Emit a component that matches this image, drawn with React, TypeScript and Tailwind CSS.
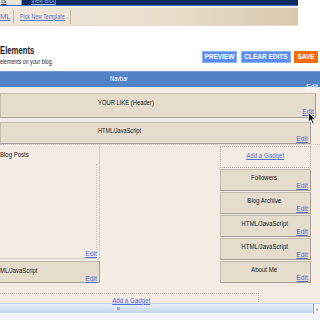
import React from "react";

const Edit = ({ className = "" }: { className?: string }) => (
  <span className={"text-[7.5px] leading-none text-[#4f6fd8] " + className}>
    <span className="inline-block origin-right scale-x-[0.9] underline">Edit</span>
  </span>
);

const Gadget = ({ title }: { title: string }) => (
  <div className="h-[22px] bg-[#e6dccb] border border-[#c3bbae] border-b-[#a9a197] border-r-[#a9a197] flex flex-col pr-[2px]">
    <div className="text-center text-[8px] leading-none text-[#1a1a1a] mt-[4px] whitespace-nowrap">
      <span className="inline-block scale-x-[0.76]">{title}</span>
    </div>
    <div className="flex justify-end mt-auto mb-[1px]">
      <Edit />
    </div>
  </div>
);

export default function App() {
  return (
    <div className="w-[320px] h-[320px] overflow-hidden bg-white flex flex-col font-['Liberation_Sans',Arial,sans-serif] relative">
      {/* top nav */}
      <div className="h-[8px] flex shrink-0">
        <div className="w-[298px] flex flex-col">
          <div className="h-[5px] flex">
            <div className="w-[22px] bg-[#ece4d6] border-r border-[#9a9080] overflow-hidden">
              <div className="text-[7px] leading-none text-[#333] underline -mt-[3px] pl-[1px]">ts</div>
            </div>
            <div className="flex-1 bg-[#0c2c62] overflow-hidden">
              <div className="text-[7px] leading-none text-[#9fbdf0] -mt-[3px] pl-[9px]">
                <span className="inline-block origin-left scale-x-[0.8] underline">View Blog</span>
              </div>
            </div>
          </div>
          <div className="h-[1px] bg-[#3d6cc0]" />
          <div className="h-[2px] bg-[#f3ede6]" />
        </div>
        <div className="flex-1" />
      </div>

      {/* tan tabs bar */}
      <div className="h-[18px] flex shrink-0">
        <div className="w-[298px] bg-gradient-to-r from-[#f0e8dc] via-[#ebe0cf] to-[#d9c8ad] flex items-center border-b border-[#e6dccd]">
          <span className="text-[7.5px] leading-none text-[#5577cc] underline">ML</span>
          <div className="w-px h-[14px] bg-[#c8b89e] ml-[3px]" />
          <span className="text-[7.5px] leading-none text-[#5577cc] ml-[6px] w-[45px] whitespace-nowrap">
            <span className="inline-block origin-left scale-x-[0.7] underline">Pick New Template</span>
          </span>
          <div className="w-px h-[14px] bg-[#c8b89e] ml-[5px]" />
        </div>
        <div className="flex-1" />
      </div>

      {/* title + buttons */}
      <div className="h-[45px] flex shrink-0">
        <div className="flex flex-col pt-[19px] w-[80px] whitespace-nowrap">
          <div className="text-[11px] leading-none font-bold text-[#222]">
            <span className="inline-block origin-left scale-x-[0.7]">Elements</span>
          </div>
          <div className="text-[7px] leading-none text-[#222] mt-[2px]">
            <span className="inline-block origin-left scale-x-[0.75]">elements on your blog.</span>
          </div>
        </div>
        <div className="ml-auto flex items-start pt-[25px] pr-[2px]">
          <div className="h-[12px] w-[35px] bg-[#5b8ef0] border border-[#8db3f7] flex items-center justify-center text-[6.5px] font-bold text-white leading-none">PREVIEW</div>
          <div className="h-[12px] w-[50px] ml-[4px] bg-[#5b8ef0] border border-[#8db3f7] flex items-center justify-center text-[6.5px] font-bold text-white leading-none">CLEAR EDITS</div>
          <div className="h-[12px] w-[24px] ml-[3px] bg-[#f26c0a] flex items-center justify-center text-[6.5px] font-bold text-white leading-none">SAVE</div>
        </div>
      </div>

      {/* navbar */}
      <div className="h-[16px] bg-[#5283c5] border-t border-[#6f9ad6] flex flex-col shrink-0 pr-[2px]">
        <div className="text-[7.5px] leading-none text-white pl-[110px] mt-[3px]">
          <span className="inline-block origin-left scale-x-[0.74]">Navbar</span>
        </div>
        <div className="flex justify-end mt-auto mb-[3px]">
          <span className="text-[7.5px] leading-none text-white">
            <span className="inline-block origin-right scale-x-[0.9] underline">Edit</span>
          </span>
        </div>
      </div>

      {/* beige content */}
      <div className="flex-1 bg-[#f4ece2] flex flex-col">
        <div className="h-[6px]" />
        {/* header */}
        <div className="h-[25px] w-[316px] bg-[#e6dccb] border border-[#c3bbae] border-b-[#a9a197] border-r-[#a9a197] flex flex-col pr-[1px]">
          <div className="text-[8px] leading-none text-[#1a1a1a] pl-[97px] mt-[5px] whitespace-nowrap">
            <span className="inline-block origin-left scale-x-[0.73]">YOUR LIKE (Header)</span>
          </div>
          <div className="flex justify-end mt-auto mb-[2px]">
            <Edit />
          </div>
        </div>
        <div className="h-[4px]" />
        {/* html */}
        <div className="h-[22px] w-[311px] bg-[#e6dccb] border border-[#c3bbae] border-b-[#a9a197] border-r-[#a9a197] flex flex-col pr-[2px]">
          <div className="text-[8px] leading-none text-[#1a1a1a] pl-[97px] mt-[4px] whitespace-nowrap">
            <span className="inline-block origin-left scale-x-[0.7]">HTML/JavaScript</span>
          </div>
          <div className="flex justify-end mt-auto mb-[1px]">
            <Edit />
          </div>
        </div>
        <div className="h-[1px] border-b border-dotted border-[#b9c8e8]" />

        {/* columns */}
        <div className="flex mt-[1px] h-[146px] overflow-hidden">
          {/* left */}
          <div className="w-[100px] flex flex-col">
            <div className="h-[112px] border-r border-[#d6cec2] flex flex-col pr-[2px] relative">
              <div className="absolute right-[2px] top-[18px] bottom-[8px] border-r border-dotted border-[#ccc4b8]" />
              <div className="text-[8px] leading-none text-[#1a1a1a] mt-[5px] whitespace-nowrap">
                <span className="inline-block origin-left scale-x-[0.75]">Blog Posts</span>
              </div>
              <div className="flex justify-end mt-auto mb-[1px]">
                <Edit />
              </div>
            </div>
            <div className="h-[1px] bg-[#d6cec2]" />
            <div className="h-[2px]" />
            <div className="h-[22px] bg-[#e6dccb] border border-l-0 border-[#c3bbae] border-b-[#a9a197] border-r-[#a9a197] flex flex-col pr-[2px]">
              <div className="text-[8px] leading-none text-[#1a1a1a] mt-[5px] whitespace-nowrap">
                <span className="inline-block origin-left scale-x-[0.74]">ML/JavaScript</span>
              </div>
              <div className="flex justify-end mt-auto mb-[1px]">
                <Edit />
              </div>
            </div>
          </div>
          {/* middle */}
          <div className="w-[120px]" />
          {/* right */}
          <div className="w-[91px] flex flex-col gap-[1px]">
            <div className="h-[22px] border border-dotted border-[#b8b0a4] flex justify-center">
              <span className="text-[7.5px] leading-none text-[#4f6fd8] mt-[5px] whitespace-nowrap">
                <span className="inline-block scale-x-[0.82] underline">Add a Gadget</span>
              </span>
            </div>
            <Gadget title="Followers" />
            <Gadget title="Blog Archive" />
            <Gadget title="HTML/JavaScript" />
            <Gadget title="HTML/JavaScript" />
            <Gadget title="About Me" />
          </div>
        </div>

        {/* footer add gadget */}
        <div className="h-[9px] mt-[1px] w-[259px] border-t border-r border-dotted border-[#b8b0a4] flex justify-center">
          <span className="text-[7.5px] leading-none text-[#4f6fd8] mt-[3px] -mr-[4px] whitespace-nowrap">
            <span className="inline-block scale-x-[0.82] underline">Add a Gadget</span>
          </span>
        </div>
      </div>

      {/* scrollbar */}
      <div className="h-[10px] shrink-0 flex bg-gradient-to-b from-[#e9f0fa] via-[#d6e3f5] to-[#c3d4ee] border-t border-[#c8d6ec]">
        <div className="flex-1 flex items-center">
          <div className="w-[3px] h-[3px] bg-[#9fb1cc] ml-[117px]" />
        </div>
        <div className="w-[7px] bg-[#f2f4fa] border-l border-[#8aa0c0] flex items-center justify-center text-[6px] leading-none text-[#333]">›</div>
      </div>
      <div className="h-[7px] shrink-0 bg-[#f3f3fa]" />

      {/* cursor */}
      <svg className="absolute left-[308px] top-[112px]" width="8" height="13" viewBox="0 0 8 13">
        <path d="M0.5 0.5 L0.5 10 L2.8 7.8 L4.6 12 L6 11.3 L4.2 7.3 L7.2 7.3 Z" fill="#111" stroke="#fff" strokeWidth="0.6" />
      </svg>
    </div>
  );
}
